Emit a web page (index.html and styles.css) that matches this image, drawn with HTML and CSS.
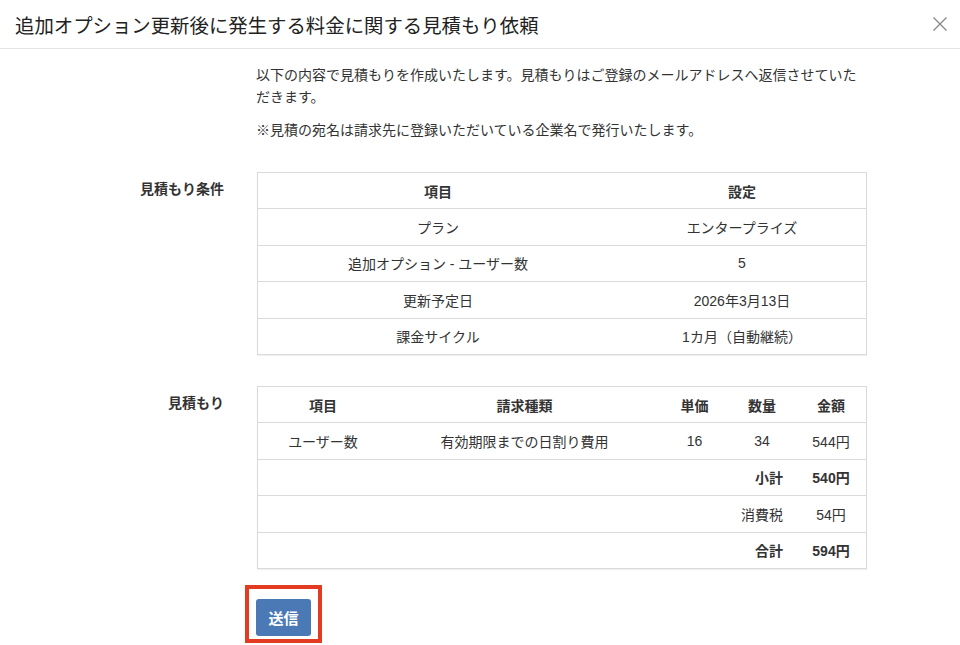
FILE: index.html
```html
<!DOCTYPE html>
<html lang="ja">
<head>
  <meta charset="UTF-8" />
  <meta name="viewport" content="width=device-width, initial-scale=1.0" />
  <title>見積もり依頼</title>
  <link rel="stylesheet" href="styles.css">
</head>
<body>
  <div class="modal">
    <div class="modal-header">
      <h1 class="modal-title">追加オプション更新後に発生する料金に関する見積もり依頼</h1>
      <button class="close-btn" aria-label="閉じる">
        <svg width="16" height="16" viewBox="0 0 16 16"><path d="M1.5 1.5l13 13M14.5 1.5l-13 13" stroke="#8a8a8a" stroke-width="1.4" fill="none"/></svg>
      </button>
    </div>

    <div class="modal-body">
      <div class="row">
        <div class="label"></div>
        <div class="intro">
          <p>以下の内容で見積もりを作成いたします。見積もりはご登録のメールアドレスへ返信させていただきます。</p>
          <p>※見積の宛名は請求先に登録いただいている企業名で発行いたします。</p>
        </div>
      </div>

      <div class="row">
        <div class="label">見積もり条件</div>
        <table class="table conditions">
          <tr><th class="c1">項目</th><th>設定</th></tr>
          <tr><td>プラン</td><td>エンタープライズ</td></tr>
          <tr><td>追加オプション - ユーザー数</td><td>5</td></tr>
          <tr><td>更新予定日</td><td>2026年3月13日</td></tr>
          <tr><td>課金サイクル</td><td>1カ月（自動継続）</td></tr>
        </table>
      </div>

      <div class="row">
        <div class="label">見積もり</div>
        <table class="table estimate">
          <tr>
            <th class="e1">項目</th>
            <th class="e2">請求種類</th>
            <th class="e3">単価</th>
            <th class="e4">数量</th>
            <th>金額</th>
          </tr>
          <tr><td>ユーザー数</td><td>有効期限までの日割り費用</td><td>16</td><td>34</td><td>544円</td></tr>
          <tr class="sum strong"><td colspan="4">小計</td><td>540円</td></tr>
          <tr class="sum"><td colspan="4">消費税</td><td>54円</td></tr>
          <tr class="sum strong"><td colspan="4">合計</td><td>594円</td></tr>
        </table>
      </div>

      <div class="row">
        <div class="label"></div>
        <div class="actions">
          <span class="highlight"><button class="btn">送信</button></span>
        </div>
      </div>
    </div>
  </div>
</body>
</html>
```

FILE: styles.css
```css
body {
  font-family: "Liberation Sans", "Noto Sans CJK JP", sans-serif;
  color: #333;
  background: #fff;
  margin: 0;
  overflow: hidden;
}
.modal-header {
  display: flex;
  justify-content: space-between;
  align-items: center;
  height: 48px;
  padding: 0 12px 0 15px;
  border-bottom: 1px solid #e3e3e3;
}
.modal-title {
  margin: 0;
  font-size: 19.4px;
  font-weight: normal;
  color: #222;
}
.close-btn {
  background: none;
  border: none;
  padding: 0;
  width: 16px;
  height: 16px;
  cursor: pointer;
}
.modal-body {
  padding-top: 15px;
}
.row {
  display: grid;
  grid-template-columns: 224px 610px;
  column-gap: 32px;
  margin-bottom: 31px;
  font-size: 14px;
}
.label {
  text-align: right;
  font-weight: bold;
  line-height: 22px;
  padding-top: 6px;
}
.intro p {
  margin: 0 0 11px;
  line-height: 22px;
}
.intro p:last-child {
  margin-bottom: 0;
}
.table {
  width: 610px;
  border-collapse: collapse;
  border: 1px solid #dadada;
  box-shadow: 0 1px 1px rgba(0, 0, 0, 0.06);
  margin-left: 1px;
}
.table th,
.table td {
  height: 35.4px;
  padding: 0 8px;
  text-align: center;
  border-top: 1px solid #dadada;
  font-size: 14px;
}
.table th {
  font-weight: bold;
  border-top: none;
}
.conditions .c1 { width: 344px; }
.estimate .e1 { width: 114px; }
.estimate .e2 { width: 257px; }
.estimate .e3 { width: 51px; }
.estimate .e4 { width: 52px; }
.estimate .sum td:first-child {
  text-align: right;
  padding-right: 13px;
}
.estimate .strong td {
  font-weight: bold;
}
.actions {
  margin-top: -15px;
  margin-left: -11px;
}
.highlight {
  display: inline-block;
  border: 4px solid #e23b22;
  padding: 10px 7px 3px 7px;
}
.btn {
  display: block;
  width: 55px;
  height: 37px;
  background-color: #4a79b5;
  border: none;
  border-radius: 3px;
  color: #fff;
  font-family: inherit;
  font-size: 15px;
  font-weight: bold;
  cursor: pointer;
}
```
